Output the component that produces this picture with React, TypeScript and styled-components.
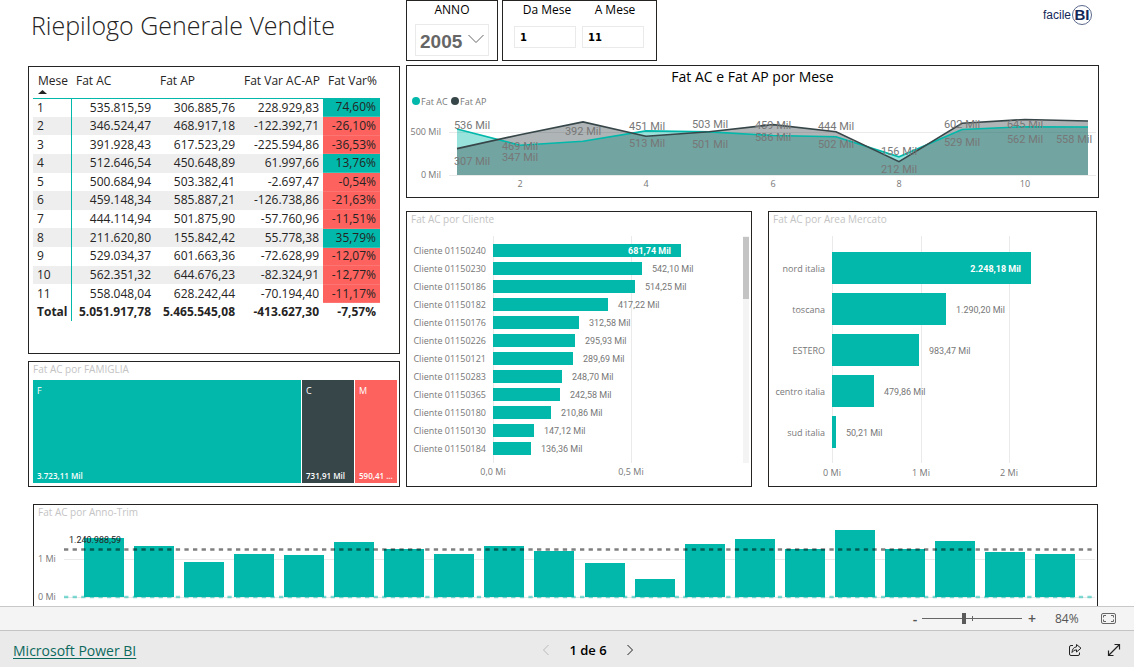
import React from "react";
import styled, { createGlobalStyle } from "styled-components";

const teal = "#01b8aa";
const slate = "#374649";
const coral = "#fd625e";
const ink = "#252423";
const sans = '"Open Sans", "Noto Sans", sans-serif';
const din = 'Roboto, "Liberation Sans", sans-serif';

const GlobalStyle = createGlobalStyle`
  *, *::before, *::after { box-sizing: border-box; }
  body { margin: 0; background: #fff; color: ${ink}; font-family: ${sans}; }
  h1, h2, p { margin: 0; font-weight: 400; }
  button, input, select { font: inherit; color: inherit; }
`;

const Shell = styled.div`
  display: grid;
  grid-template-rows: minmax(0, 1fr) auto auto;
  height: 100vh;
`;

const Report = styled.main`
  overflow: hidden;
  padding: 0 35px 0 28px;
`;

const Columns = styled.div`
  display: grid;
  grid-template-columns: minmax(0, 372fr) minmax(0, 693fr);
  gap: 6px;
`;

const Column = styled.div`
  display: flex;
  flex-direction: column;
`;

const PageTitle = styled.h1`
  height: 66px;
  padding: 4px 0 0 3px;
  font-size: 25px;
  line-height: 42px;
  font-weight: 300;
  white-space: nowrap;
`;

const Panel = styled.section`
  background: #fff;
  border: 1px solid ${ink};
`;

const TablePanel = styled(Panel)`
  height: 288px;
  padding: 4px;
  margin-bottom: 7px;
`;

const DataTable = styled.table`
  width: 347px;
  height: 250px;
  border-collapse: collapse;
  table-layout: fixed;
  font-size: 12px;
  line-height: 16px;
`;

const HeadCell = styled.th`
  position: relative;
  height: 27px;
  padding: 2px 0 0 5px;
  border-bottom: 1px solid ${teal};
  font-weight: 400;
  text-align: left;
  vertical-align: top;
  white-space: nowrap;
`;

const SortMark = styled.svg`
  position: absolute;
  left: 5px;
  bottom: 4px;
`;

const BodyRow = styled.tr<{ $striped: boolean }>`
  background: ${(p) => (p.$striped ? "#eee" : "#fff")};
`;

const RowHead = styled.th<{ $strong?: boolean }>`
  padding: 0 0 0 4px;
  border-right: 1px solid ${teal};
  font-weight: ${(p) => (p.$strong ? 700 : 400)};
  text-align: left;
`;

const Cell = styled.td<{ $strong?: boolean }>`
  padding: 0 4px 0 0;
  font-weight: ${(p) => (p.$strong ? 700 : 400)};
  text-align: right;
`;

const RateCell = styled(Cell)<{ $up: boolean }>`
  background: ${(p) => (p.$up ? teal : coral)};
  border-bottom: 1px solid ${(p) => (p.$up ? "#35c2b7" : "#fd7572")};
`;

const TreePanel = styled(Panel)`
  height: 126px;
  display: flex;
  flex-direction: column;
`;

const PanelTitle = styled.h2`
  padding-left: 4px;
  color: #c4c4c4;
  font-size: 10px;
  line-height: 15px;
  padding-bottom: 1px;
`;

const Treemap = styled.div`
  flex: 1;
  display: grid;
  grid-template-columns: 268fr 52fr 42fr;
  gap: 1px;
  padding: 2px 2px 3px 4px;
`;

const Tile = styled.div<{ $color: string }>`
  min-width: 0;
  display: flex;
  flex-direction: column;
  justify-content: space-between;
  padding: 4px 4px 0;
  background: ${(p) => p.$color};
  color: #fff;
  font-size: 9px;
  line-height: 14px;
`;

const TileValue = styled.span`
  font-size: 8px;
  font-weight: 600;
  white-space: nowrap;
`;

const TopBar = styled.header`
  display: flex;
  align-items: flex-start;
  gap: 4px;
  margin-bottom: 4px;
`;

const YearSlicer = styled(Panel)`
  width: 92px;
  height: 61px;
  padding: 0 8px;
  text-align: center;
`;

const SlicerLabel = styled.label`
  display: block;
  color: #000;
  font-size: 12px;
  line-height: 18px;
  text-align: center;
`;

const MonthLabel = styled(SlicerLabel)`
  text-indent: 4px;
`;

const YearBox = styled.div`
  position: relative;
  height: 32px;
  margin-top: 5px;
  border: 1px solid #eaeaea;
`;

const YearSelect = styled.select`
  width: 100%;
  height: 30px;
  padding: 2px 0 0 4px;
  border: 0;
  background: none;
  appearance: none;
  color: #666;
  font-family: "Liberation Sans", sans-serif;
  font-size: 19px;
  font-weight: 700;
`;

const YearChevron = styled.svg`
  position: absolute;
  right: 4px;
  top: 9px;
  pointer-events: none;
`;

const MonthSlicer = styled(Panel)`
  display: grid;
  grid-template-columns: 62px 62px;
  gap: 6px;
  height: 61px;
  width: 155px;
  padding: 0 11px;
`;

const MonthInput = styled.input`
  width: 100%;
  height: 22px;
  margin-top: 7px;
  padding: 0 5px;
  border: 1px solid #eaeaea;
  color: #000;
  font-family: "DejaVu Sans", sans-serif;
  font-size: 10px;
  font-weight: 700;
  text-indent: 0;
`;

const Brand = styled.div`
  display: flex;
  align-items: center;
  gap: 1px;
  margin-left: auto;
  padding: 5px 7px 0 0;
  color: #14285a;
  font-family: "Liberation Sans", sans-serif;
  font-size: 12px;
`;

const BrandMark = styled.span`
  width: 20px;
  height: 20px;
  border: 1px solid #5a688c;
  border-radius: 50%;
  font-size: 15px;
  line-height: 18px;
  font-weight: 700;
  text-align: center;
`;

const TrendPanel = styled(Panel)`
  margin-bottom: 13px;
`;

const TrendTitle = styled.h2`
  color: #000;
  font-size: 14px;
  line-height: 22px;
  text-align: center;
`;

const Pair = styled.div`
  display: grid;
  grid-template-columns: minmax(0, 346fr) minmax(0, 329fr);
  gap: 16px;
  padding-right: 2px;
`;

const QuarterPanel = styled(Panel)`
  margin: 17px 1px 0 5px;
`;

const Chart = styled.svg`
  display: block;
  width: 100%;
  height: auto;
`;

const AxisText = styled.text`
  fill: #777;
  font-family: ${sans};
  font-size: 9px;
`;

const ValueText = styled.text<{ $size?: number; $inside?: boolean }>`
  fill: ${(p) => (p.$inside ? "#fff" : "#777")};
  font-family: ${din};
  font-size: ${(p) => p.$size ?? 9}px;
  font-weight: ${(p) => (p.$inside ? 700 : 400)};
`;

const AverageText = styled(ValueText)`
  fill: ${ink};
`;

const StatusBar = styled.div`
  display: flex;
  align-items: center;
  justify-content: flex-end;
  height: 24px;
  padding-right: 18px;
  border-top: 1px solid #c8c8c8;
  background: #f4f4f4;
  color: #555;
  font-size: 12px;
`;

const StepButton = styled.button`
  width: 10px;
  padding: 0;
  border: 0;
  background: none;
  font-size: 14px;
  line-height: 20px;
  font-weight: 600;
  text-align: center;
`;

const ZoomRange = styled.input`
  width: 100px;
  height: 12px;
  margin: 0 5px 0 2px;
  appearance: none;
  background:
    linear-gradient(#666, #666) 50% 50% / 1px 5px no-repeat,
    linear-gradient(#666, #666) 0 50% / 100% 1px no-repeat;
  &::-webkit-slider-thumb {
    appearance: none;
    width: 4px;
    height: 11px;
    background: #5a5a5a;
  }
`;

const ZoomValue = styled.span`
  width: 24px;
  margin: 0 22px 0 18px;
`;

const IconButton = styled.button<{ $muted?: boolean }>`
  display: flex;
  padding: 0;
  border: 0;
  background: none;
  color: ${(p) => (p.$muted ? "#bbb" : "#222")};
`;

const Footer = styled.footer`
  display: grid;
  grid-template-columns: 1fr auto 1fr;
  align-items: center;
  height: 37px;
  padding: 2px 13px 0;
  border-top: 1px solid #c4c4c4;
  background: #eaeaea;
`;

const FooterLink = styled.a`
  color: #0c695d;
  font-size: 14px;
  text-underline-offset: 2px;
`;

const Pager = styled.nav`
  display: flex;
  align-items: center;
  gap: 19px;
  padding-left: 42px;
  color: #000;
  font-size: 13px;
  font-weight: 600;
`;

const Actions = styled.div`
  display: flex;
  justify-content: flex-end;
  gap: 25px;
`;

type MonthRow = [string, string, string, string, string];

const months: MonthRow[] = [
  ["1", "535.815,59", "306.885,76", "228.929,83", "74,60%"],
  ["2", "346.524,47", "468.917,18", "-122.392,71", "-26,10%"],
  ["3", "391.928,43", "617.523,29", "-225.594,86", "-36,53%"],
  ["4", "512.646,54", "450.648,89", "61.997,66", "13,76%"],
  ["5", "500.684,94", "503.382,41", "-2.697,47", "-0,54%"],
  ["6", "459.148,34", "585.887,21", "-126.738,86", "-21,63%"],
  ["7", "444.114,94", "501.875,90", "-57.760,96", "-11,51%"],
  ["8", "211.620,80", "155.842,42", "55.778,38", "35,79%"],
  ["9", "529.034,37", "601.663,36", "-72.628,99", "-12,07%"],
  ["10", "562.351,32", "644.676,23", "-82.324,91", "-12,77%"],
  ["11", "558.048,04", "628.242,44", "-70.194,40", "-11,17%"],
];

const columnWidths = [38, 84, 84, 84, 57];

function MonthTable() {
  return (
    <DataTable>
      <colgroup>
        {columnWidths.map((width, i) => (
          <col key={i} width={width} />
        ))}
      </colgroup>
      <thead>
        <tr>
          <HeadCell scope="col" aria-sort="ascending">
            Mese
            <SortMark width="9" height="4" viewBox="0 0 9 4" aria-hidden="true">
              <path d="M0 4L4.500 0L9 4Z" fill={ink} />
            </SortMark>
          </HeadCell>
          <HeadCell scope="col">Fat AC</HeadCell>
          <HeadCell scope="col">Fat AP</HeadCell>
          <HeadCell scope="col">Fat Var AC-AP</HeadCell>
          <HeadCell scope="col">Fat Var%</HeadCell>
        </tr>
      </thead>
      <tbody>
        {months.map(([month, ac, ap, diff, rate], i) => (
          <BodyRow key={month} $striped={i % 2 === 1}>
            <RowHead scope="row">{month}</RowHead>
            <Cell>{ac}</Cell>
            <Cell>{ap}</Cell>
            <Cell>{diff}</Cell>
            <RateCell $up={!rate.startsWith("-")}>{rate}</RateCell>
          </BodyRow>
        ))}
        <BodyRow $striped={false}>
          <RowHead scope="row" $strong>Total</RowHead>
          <Cell $strong>5.051.917,78</Cell>
          <Cell $strong>5.465.545,08</Cell>
          <Cell $strong>-413.627,30</Cell>
          <Cell $strong>-7,57%</Cell>
        </BodyRow>
      </tbody>
    </DataTable>
  );
}

const current = [536, 347, 392, 513, 501, 459, 444, 212, 529, 562, 558];
const previous = [307, 469, 618, 451, 503, 586, 502, 156, 602, 645, 628];

const trendLabels: [string, number, number][] = [
  ["536", 65, 41], ["307", 65, 77], ["469", 113, 62], ["347", 113, 73],
  ["392", 176, 47], ["451", 240, 42], ["513", 240, 59], ["503", 303, 40],
  ["501", 303, 60], ["459", 366, 41], ["586", 366, 53], ["444", 429, 42],
  ["502", 429, 60], ["156", 492, 67], ["212", 492, 85], ["602", 555, 40],
  ["529", 555, 58], ["645", 618, 40], ["562", 618, 55], ["558", 667, 55],
];

function TrendChart() {
  const x = (i: number) => Math.round(50 + i * 63.1);
  const y = (v: number) => 87 - (v * 43) / 500;
  const line = (data: number[]) => data.map((v, i) => `${x(i)},${y(v).toFixed(1)}`).join(" ");
  const area = (data: number[]) => `${x(0)},87 ${line(data)} ${x(10)},87`;
  return (
    <Chart viewBox="0 0 691 109" role="img" aria-label="Fat AC e Fat AP por Mese">
      <circle cx="9" cy="13" r="4" fill={teal} />
      <AxisText x="14" y="17">Fat AC</AxisText>
      <circle cx="48" cy="13" r="4" fill={slate} />
      <AxisText x="53" y="17">Fat AP</AxisText>
      <path d="M42 44.5H689M42 87.5H689" stroke="#eaeaea" />
      <AxisText x="34" y="47" textAnchor="end">500 Mil</AxisText>
      <AxisText x="34" y="90" textAnchor="end">0 Mil</AxisText>
      <polygon points={area(current)} fill={teal} fillOpacity="0.4" />
      <polygon points={area(previous)} fill={slate} fillOpacity="0.4" />
      <polyline points={line(current)} fill="none" stroke={teal} strokeWidth="1.6" />
      <polyline points={line(previous)} fill="none" stroke={slate} strokeWidth="1.6" />
      {trendLabels.map(([text, cx, base]) => (
        <ValueText key={text} $size={11} x={cx} y={base} textAnchor="middle">{text} Mil</ValueText>
      ))}
      {[2, 4, 6, 8, 10].map((m) => (
        <AxisText key={m} x={x(m - 1)} y="99" textAnchor="middle">{m}</AxisText>
      ))}
    </Chart>
  );
}

interface BarDatum {
  name: string;
  value: number;
  label: string;
}

interface BarChartProps {
  title: string;
  data: BarDatum[];
  width: number;
  height: number;
  origin: number;
  perUnit: number;
  first: number;
  pitch: number;
  thickness: number;
  ticks: [number, string][];
  axisY: number;
  scroll?: boolean;
}

function BarChart(p: BarChartProps) {
  return (
    <Chart viewBox={`0 0 ${p.width} ${p.height}`} role="img" aria-label={p.title}>
      {p.ticks.map(([value, text]) => {
        const tx = Math.round(p.origin + value * p.perUnit);
        return (
          <g key={text}>
            <path d={`M${tx + 0.5} 8V235`} stroke="#eaeaea" />
            <AxisText x={tx} y={p.axisY} textAnchor="middle">{text}</AxisText>
          </g>
        );
      })}
      {p.data.map((d, i) => {
        const mid = p.first + i * p.pitch;
        const length = Math.round(d.value * p.perUnit);
        const inside = i === 0;
        return (
          <g key={d.name}>
            <AxisText x={p.origin - 7} y={mid + 4} textAnchor="end">{d.name}</AxisText>
            <rect x={p.origin} y={mid - Math.floor(p.thickness / 2)} width={length} height={p.thickness} fill={teal} />
            <ValueText
              $inside={inside}
              x={p.origin + length + (inside ? -10 : 10)}
              y={mid + 4}
              textAnchor={inside ? "end" : "start"}
            >
              {d.label} Mil
            </ValueText>
          </g>
        );
      })}
      {p.scroll && (
        <>
          <rect x="336" y="8" width="6" height="227" fill="#f4f4f4" />
          <rect x="336" y="9" width="6" height="62" fill="#c4c4c4" />
        </>
      )}
    </Chart>
  );
}

const toDatum = ([name, label]: [string, string]): BarDatum => ({
  name,
  label,
  value: Number(label.replace(".", "").replace(",", ".")),
});

const clients = ([
  ["01150240", "681,74"], ["01150230", "542,10"], ["01150186", "514,25"],
  ["01150182", "417,22"], ["01150176", "312,58"], ["01150226", "295,93"],
  ["01150121", "289,69"], ["01150283", "248,70"], ["01150365", "242,58"],
  ["01150180", "210,86"], ["01150130", "147,12"], ["01150184", "136,36"],
] as [string, string][]).map(([id, label]) => toDatum([`Cliente ${id}`, label]));

const markets = ([
  ["nord italia", "2.248,18"],
  ["toscana", "1.290,20"],
  ["ESTERO", "983,47"],
  ["centro italia", "479,86"],
  ["sud italia", "50,21"],
] as [string, string][]).map(toDatum);

const quarterHeights = [59, 51, 35, 43, 42, 55, 48, 43, 51, 46, 34, 18, 53, 58, 48, 67, 48, 56, 45, 43];

function QuarterChart() {
  return (
    <Chart viewBox="0 0 1063 110" role="img" aria-label="Fat AC por Anno-Trim">
      <path d="M30 38.5H1061M30 76.5H1061" stroke="#eaeaea" />
      <AxisText x="4" y="41">1 Mi</AxisText>
      <AxisText x="4" y="79">0 Mi</AxisText>
      {quarterHeights.map((h, i) => (
        <rect key={i} x={Math.round(50 + i * 50.05)} y={76 - h} width="40" height={h} fill={teal} />
      ))}
      <path d="M30 76H1061" stroke={teal} strokeOpacity="0.5" strokeWidth="2.500" strokeDasharray="4.3 4.3" />
      <path d="M30 28.5H1061" stroke="#000" strokeOpacity="0.5" strokeWidth="2.500" strokeDasharray="4.3 4.3" />
      <AverageText x="35" y="22">1.240.988,59</AverageText>
    </Chart>
  );
}

const Chevron = ({ d }: { d: string }) => (
  <svg width="8" height="12" viewBox="0 0 8 12" fill="none" stroke="currentColor" aria-hidden="true">
    <path d={d} />
  </svg>
);

export default function App() {
  return (
    <Shell>
      <GlobalStyle />
      <Report>
        <Columns>
          <Column>
            <PageTitle>Riepilogo Generale Vendite</PageTitle>
            <TablePanel>
              <MonthTable />
            </TablePanel>
            <TreePanel>
              <PanelTitle>Fat AC por FAMIGLIA</PanelTitle>
              <Treemap>
                <Tile $color={teal}>F<TileValue>3.723,11 Mil</TileValue></Tile>
                <Tile $color={slate}>C<TileValue>731,91 Mil</TileValue></Tile>
                <Tile $color={coral}>M<TileValue>590,41 ...</TileValue></Tile>
              </Treemap>
            </TreePanel>
          </Column>
          <Column>
            <TopBar>
              <YearSlicer>
                <SlicerLabel htmlFor="anno">ANNO</SlicerLabel>
                <YearBox>
                  <YearSelect id="anno" defaultValue="2005">
                    <option>2005</option>
                  </YearSelect>
                  <YearChevron width="16" height="10" viewBox="0 0 16 10" fill="none" stroke="#666" aria-hidden="true">
                    <path d="M0.5 1L8 8.5L15.5 1" />
                  </YearChevron>
                </YearBox>
              </YearSlicer>
              <MonthSlicer>
                <MonthLabel>
                  Da Mese
                  <MonthInput defaultValue="1" />
                </MonthLabel>
                <MonthLabel>
                  A Mese
                  <MonthInput defaultValue="11" />
                </MonthLabel>
              </MonthSlicer>
              <Brand>
                facile<BrandMark>BI</BrandMark>
              </Brand>
            </TopBar>
            <TrendPanel>
              <TrendTitle>Fat AC e Fat AP por Mese</TrendTitle>
              <TrendChart />
            </TrendPanel>
            <Pair>
              <Panel>
                <PanelTitle>Fat AC por Cliente</PanelTitle>
                <BarChart
                  title="Fat AC por Cliente"
                  data={clients}
                  width={344}
                  height={257}
                  origin={86}
                  perUnit={0.2755}
                  first={22}
                  pitch={18}
                  thickness={13}
                  ticks={[[0, "0,0 Mi"], [500, "0,5 Mi"]]}
                  axisY={247}
                  scroll
                />
              </Panel>
              <Panel>
                <PanelTitle>Fat AC por Area Mercato</PanelTitle>
                <BarChart
                  title="Fat AC por Area Mercato"
                  data={markets}
                  width={327}
                  height={258}
                  origin={63}
                  perUnit={0.0885}
                  first={40}
                  pitch={41}
                  thickness={32}
                  ticks={[[0, "0 Mi"], [1000, "1 Mi"], [2000, "2 Mi"]]}
                  axisY={248}
                />
              </Panel>
            </Pair>
          </Column>
        </Columns>
        <QuarterPanel>
          <PanelTitle>Fat AC por Anno-Trim</PanelTitle>
          <QuarterChart />
        </QuarterPanel>
      </Report>
      <StatusBar>
        <StepButton aria-label="Riduci">-</StepButton>
        <ZoomRange type="range" min="0" max="200" defaultValue="84" aria-label="Zoom" />
        <StepButton aria-label="Ingrandisci">+</StepButton>
        <ZoomValue>84%</ZoomValue>
        <IconButton aria-label="Adatta alla pagina">
          <svg width="15" height="11" viewBox="0 0 15 11" fill="none" stroke="#666" aria-hidden="true">
            <rect x="0.5" y="0.5" width="14" height="10" rx="1.5" />
            <path d="M5 2.5H2.5V4.500M10 2.500H12.500V4.500M5 8.500H2.500V6.500M10 8.500H12.500V6.500" />
          </svg>
        </IconButton>
      </StatusBar>
      <Footer>
        <div>
          <FooterLink href="#">Microsoft Power BI</FooterLink>
        </div>
        <Pager aria-label="Pagine">
          <IconButton $muted aria-label="Pagina precedente">
            <Chevron d="M6.5 1L1.5 6L6.5 11" />
          </IconButton>
          <span>1 de 6</span>
          <IconButton aria-label="Pagina successiva">
            <Chevron d="M1.5 1L6.5 6L1.5 11" />
          </IconButton>
        </Pager>
        <Actions>
          <IconButton aria-label="Condividi">
            <svg width="14" height="14" viewBox="0 0 14 14" fill="none" stroke="currentColor" strokeLinejoin="round" aria-hidden="true">
              <path d="M5 2.500H3Q1.500 2.500 1.500 4V11Q1.500 12.500 3 12.500H10Q11.500 12.500 11.500 11V9.500" />
              <path d="M8.500 1.500L13 5.200L8.500 9V6.800Q5.500 6.800 4 9.500Q4.300 4.500 8.500 3.800Z" />
            </svg>
          </IconButton>
          <IconButton aria-label="Schermo intero">
            <svg width="14" height="14" viewBox="0 0 14 14" fill="none" stroke="currentColor" strokeWidth="1.2" aria-hidden="true">
              <path d="M1.500 12.500L12.500 1.500M7.500 1.500H12.500V6.500M1.500 7.500V12.500H6.500" />
            </svg>
          </IconButton>
        </Actions>
      </Footer>
    </Shell>
  );
}
